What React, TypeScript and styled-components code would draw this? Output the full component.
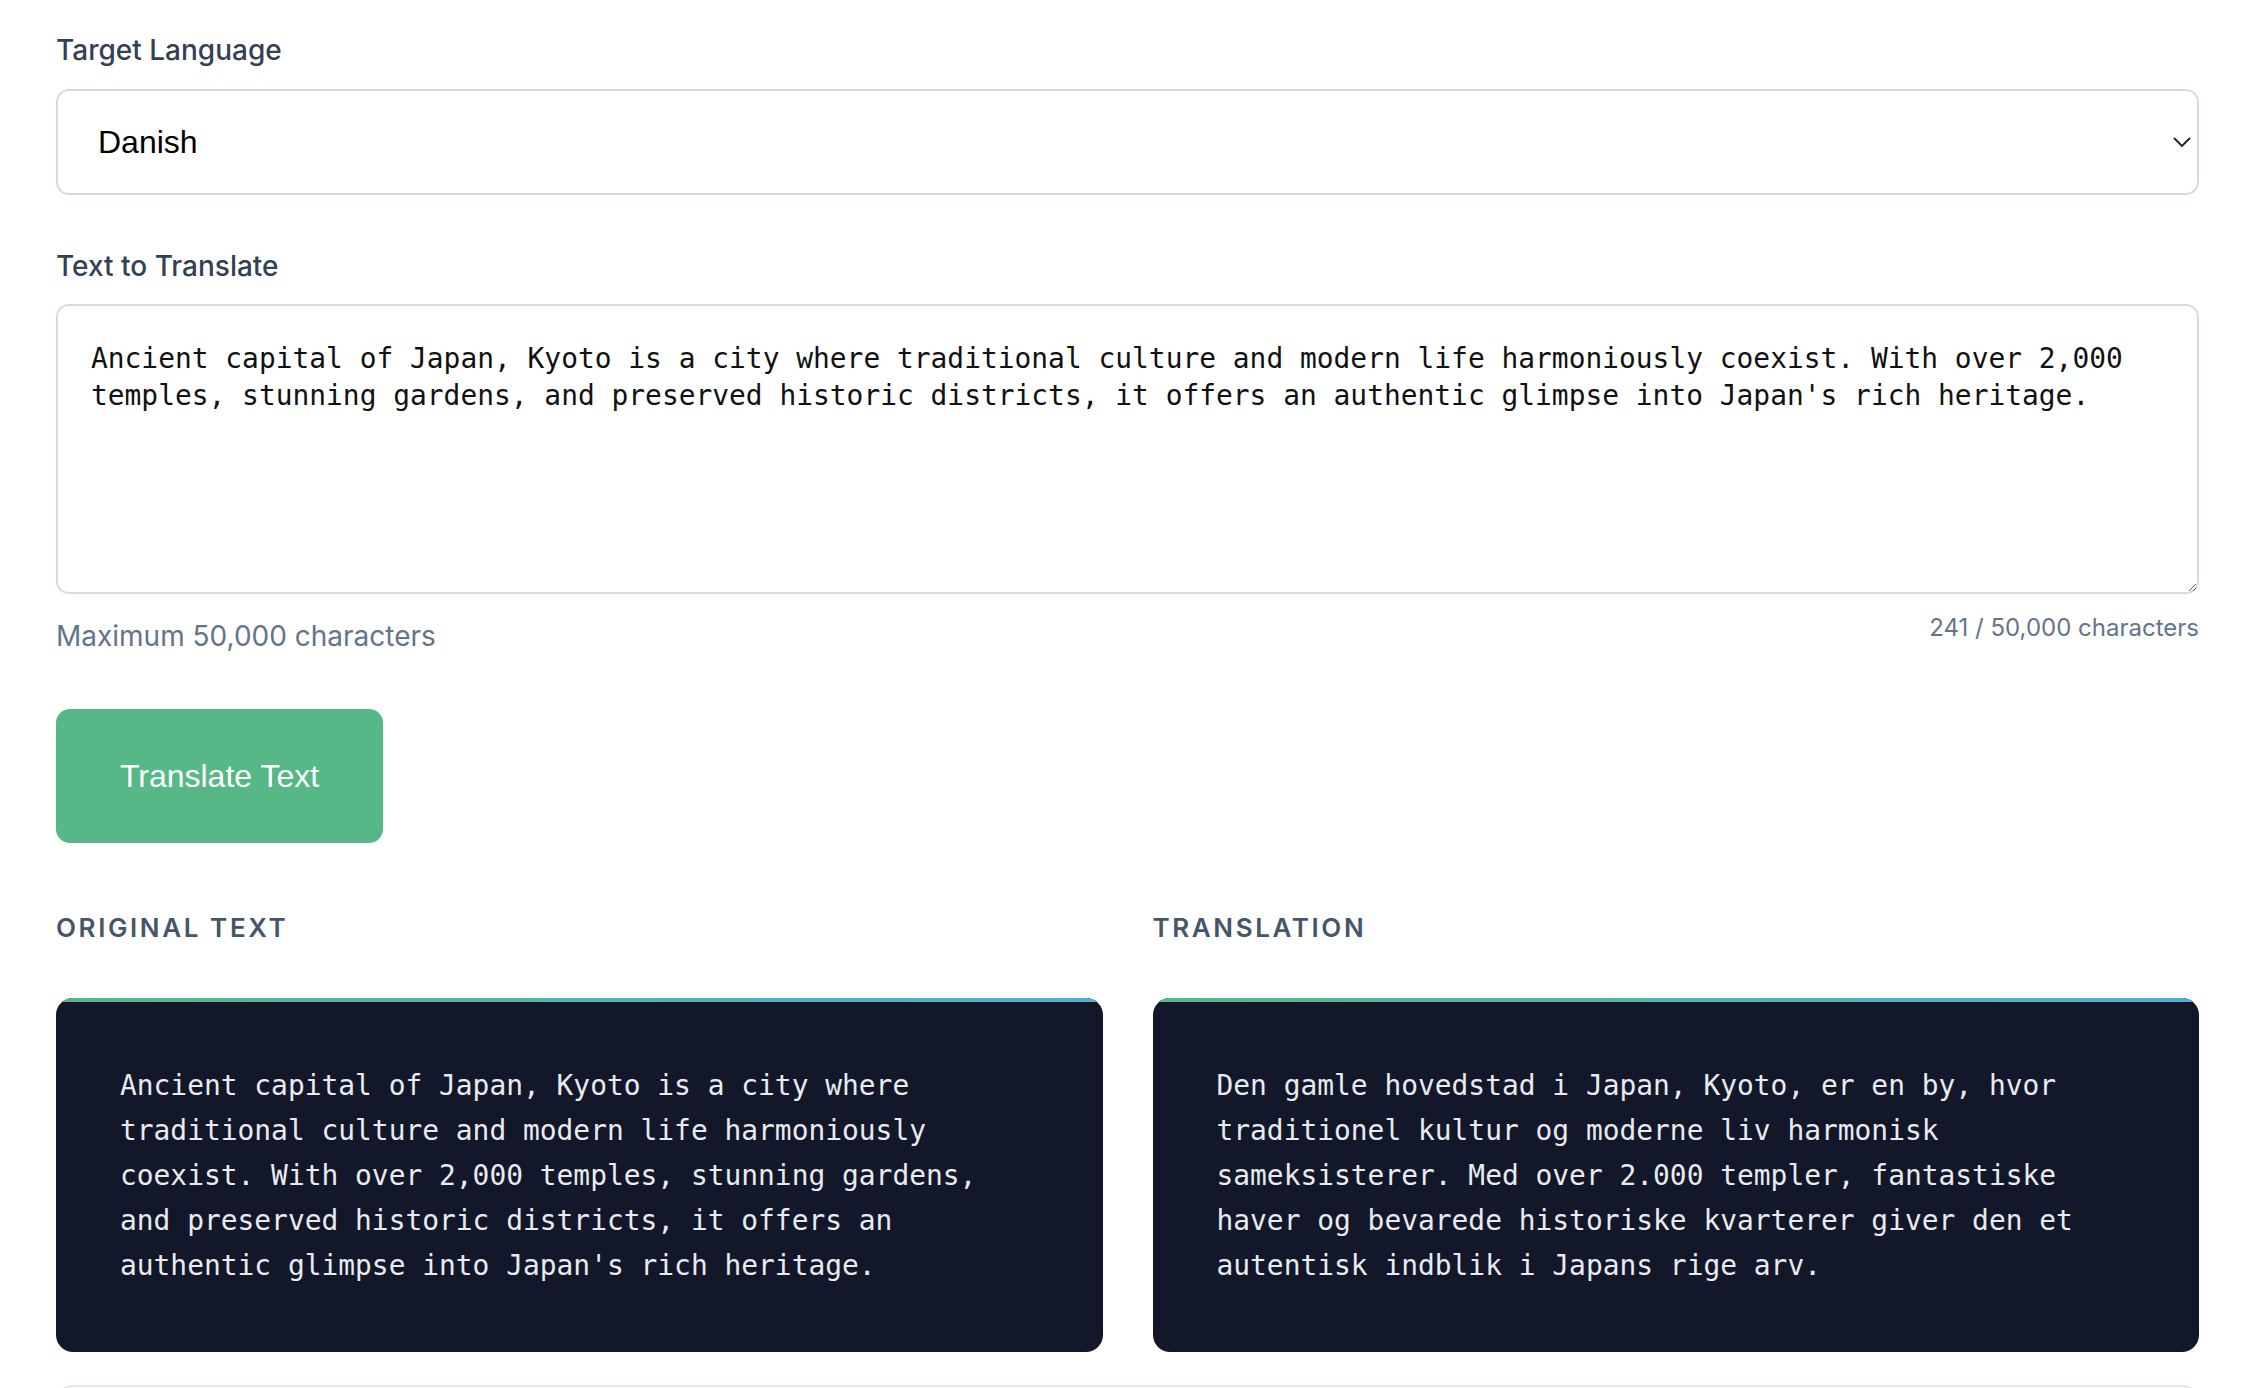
import React from 'react';
import styled, { createGlobalStyle } from 'styled-components';

const GlobalStyle = createGlobalStyle`
  html, body {
    margin: 0;
    padding: 0;
    background: #ffffff;
  }
  * {
    box-sizing: border-box;
  }
`;

const Page = styled.div`
  display: flex;
  flex-direction: column;
  padding: 33px 53px 0 56px;
  font-family: Inter, "Noto Sans", sans-serif;
`;

const Label = styled.label<{ $top?: number }>`
  display: block;
  font-size: 28px;
  line-height: 34px;
  font-weight: 500;
  color: #334155;
  margin-top: ${props => props.$top ?? 0}px;
`;

const SelectWrap = styled.div`
  position: relative;
  margin-top: 22px;
`;

const Select = styled.select`
  appearance: none;
  -webkit-appearance: none;
  width: 100%;
  height: 106px;
  padding: 0 40px;
  border: 2px solid #d3dbe6;
  border-radius: 13px;
  background: #ffffff;
  font-family: "Liberation Sans", Arial, sans-serif;
  font-size: 32px;
  color: #000000;
  outline: none;
`;

const Chevron = styled.svg`
  position: absolute;
  right: 8px;
  top: 50%;
  width: 18px;
  height: 10px;
  margin-top: -5px;
  pointer-events: none;
`;

const TextArea = styled.textarea`
  display: block;
  width: 100%;
  height: 290px;
  margin-top: 21px;
  padding: 34px 33px;
  border: 2px solid #d3dbe6;
  border-radius: 13px;
  font-family: "DejaVu Sans Mono", "Liberation Mono", monospace;
  font-size: 27.9px;
  line-height: 37px;
  color: #111111;
  resize: vertical;
  outline: none;
`;

const HintRow = styled.div`
  display: flex;
  justify-content: space-between;
  align-items: flex-start;
  margin-top: 19px;
`;

const Hint = styled.span`
  margin-top: 5px;
  font-size: 28px;
  line-height: 36px;
  color: #64748b;
`;

const Counter = styled.span`
  font-size: 24px;
  line-height: 30px;
  color: #64748b;
`;

const TranslateButton = styled.button`
  align-self: flex-start;
  width: 327px;
  height: 134px;
  margin-top: 55px;
  border: none;
  border-radius: 14px;
  background: #55b886;
  color: #ffffff;
  font-family: "Liberation Sans", Arial, sans-serif;
  font-size: 32px;
  cursor: pointer;
`;

const Results = styled.div`
  display: grid;
  grid-template-columns: 1fr 1fr;
  column-gap: 50px;
  margin-top: 69px;
`;

const Column = styled.div`
  display: flex;
  flex-direction: column;
`;

const Heading = styled.h3`
  margin: 0;
  font-size: 26px;
  line-height: 32px;
  font-weight: 600;
  letter-spacing: 2.6px;
  text-transform: uppercase;
  color: #475569;
`;

const Panel = styled.div`
  position: relative;
  overflow: hidden;
  margin-top: 54px;
  height: 354px;
  padding: 65px 64px 63px;
  border-radius: 17px;
  background: #121829;

  &::before {
    content: '';
    position: absolute;
    left: 0;
    right: 0;
    top: 0;
    height: 4px;
    background: linear-gradient(90deg, #55b886, #4eb0d2);
  }
`;

const PanelText = styled.p`
  margin: 0;
  font-family: "DejaVu Sans Mono", "Liberation Mono", monospace;
  font-size: 27.9px;
  line-height: 45px;
  color: #e8ebf0;
`;

const NextCard = styled.div`
  margin-top: 33px;
  height: 200px;
  border: 2px solid #e5e8ee;
  border-radius: 16px;
  background: #f9fafb;
`;

const original =
  "Ancient capital of Japan, Kyoto is a city where traditional culture and modern life harmoniously coexist. With over 2,000 temples, stunning gardens, and preserved historic districts, it offers an authentic glimpse into Japan's rich heritage.";

const translated =
  "Den gamle hovedstad i Japan, Kyoto, er en by, hvor traditionel kultur og moderne liv harmonisk sameksisterer. Med over 2.000 templer, fantastiske haver og bevarede historiske kvarterer giver den et autentisk indblik i Japans rige arv.";

const App: React.FC = () => {
  return (
    <>
      <GlobalStyle />
      <Page>
        <Label>Target Language</Label>
        <SelectWrap>
          <Select defaultValue="da">
            <option value="da">Danish</option>
            <option value="de">German</option>
            <option value="fr">French</option>
          </Select>
          <Chevron viewBox="0 0 18 10" fill="none">
            <path d="M1 1l8 8 8-8" stroke="#1f1f1f" strokeWidth="1.8" />
          </Chevron>
        </SelectWrap>

        <Label $top={54}>Text to Translate</Label>
        <TextArea defaultValue={original} />
        <HintRow>
          <Hint>Maximum 50,000 characters</Hint>
          <Counter>241 / 50,000 characters</Counter>
        </HintRow>

        <TranslateButton>Translate Text</TranslateButton>

        <Results>
          <Column>
            <Heading>Original Text</Heading>
            <Panel>
              <PanelText>{original}</PanelText>
            </Panel>
          </Column>
          <Column>
            <Heading>Translation</Heading>
            <Panel>
              <PanelText>{translated}</PanelText>
            </Panel>
          </Column>
        </Results>

        <NextCard />
      </Page>
    </>
  );
};

export default App;
